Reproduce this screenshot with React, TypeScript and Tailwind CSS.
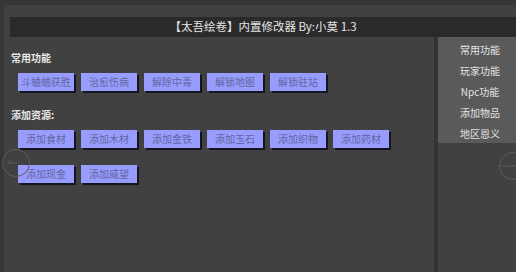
const common = ["斗蛐蛐获胜", "治愈伤病", "解除中毒", "解锁地图", "解锁驻站"];
const resources = ["添加食材", "添加木材", "添加金铁", "添加玉石", "添加织物", "添加药材", "添加现金", "添加威望"];
const menu = ["常用功能", "玩家功能", "Npc功能", "添加物品", "地区恩义"];

function ActionButton({ label }: { label: string }) {
    return (
        <button className="flex h-[18px] w-[56px] items-center justify-center bg-[#999cff] text-[10px] leading-none text-[#62669f] shadow-[2px_2px_0_#15151f]">
            {label}
        </button>
    );
}

export default function App() {
    return (
        <div className="relative h-[272px] w-[516px] overflow-hidden bg-[#363636] font-['Noto_Sans_CJK_SC',sans-serif]">
            <div className="ml-[4px] mt-[5px] h-[267px] bg-[#414141] pl-[6px] pt-[12px]">
                <div className="flex h-[20px] items-center justify-center bg-[#2a2a2a] text-[11.5px] text-[#e6e6e6]">
                    【太吾绘卷】内置修改器 By:小莫 1.3
                </div>

                <div className="flex h-[235px]">
                    <div className="w-[424px] shrink-0">
                        <div className="ml-[1px] mt-[14px] text-[10px] font-bold leading-[14px] text-[#e8e8e8]">常用功能</div>
                        <div className="mt-[8px] flex gap-[7px] pl-[8px]">
                            {common.map((c) => (
                                <ActionButton key={c} label={c} />
                            ))}
                        </div>

                        <div className="ml-[1px] mt-[17px] text-[10px] font-bold leading-[14px] text-[#e8e8e8]">添加资源:</div>
                        <div className="mt-[8px] grid w-[390px] grid-cols-[repeat(6,56px)] gap-x-[7px] gap-y-[17px] pl-[8px]">
                            {resources.map((r) => (
                                <ActionButton key={r} label={r} />
                            ))}
                        </div>
                    </div>

                    <div className="w-[4px] shrink-0 bg-[#333333]" />

                    <div className="h-[106px] w-[84px] shrink-0 bg-[#5a5a5a] pt-[2px]">
                        {menu.map((m) => (
                            <div key={m} className="flex h-[21px] items-center justify-center text-[10px] text-[#e4e4e4]">
                                {m}
                            </div>
                        ))}
                    </div>
                </div>
            </div>

            <svg className="absolute left-[2px] top-[149px]" width="30" height="30" viewBox="0 0 30 30">
                <circle cx="14" cy="14" r="13.5" fill="none" stroke="#5c5c5c" strokeWidth="1" />
                <path d="M6 14H15M6 14L10 11" fill="none" stroke="#5c5c5c" strokeWidth="1" />
            </svg>
            <svg className="absolute left-[498px] top-[152px]" width="30" height="30" viewBox="0 0 30 30">
                <circle cx="15" cy="14" r="13.5" fill="none" stroke="#5c5c5c" strokeWidth="1" />
                <path d="M3 14H24" fill="none" stroke="#5c5c5c" strokeWidth="1" />
            </svg>
        </div>
    );
}
